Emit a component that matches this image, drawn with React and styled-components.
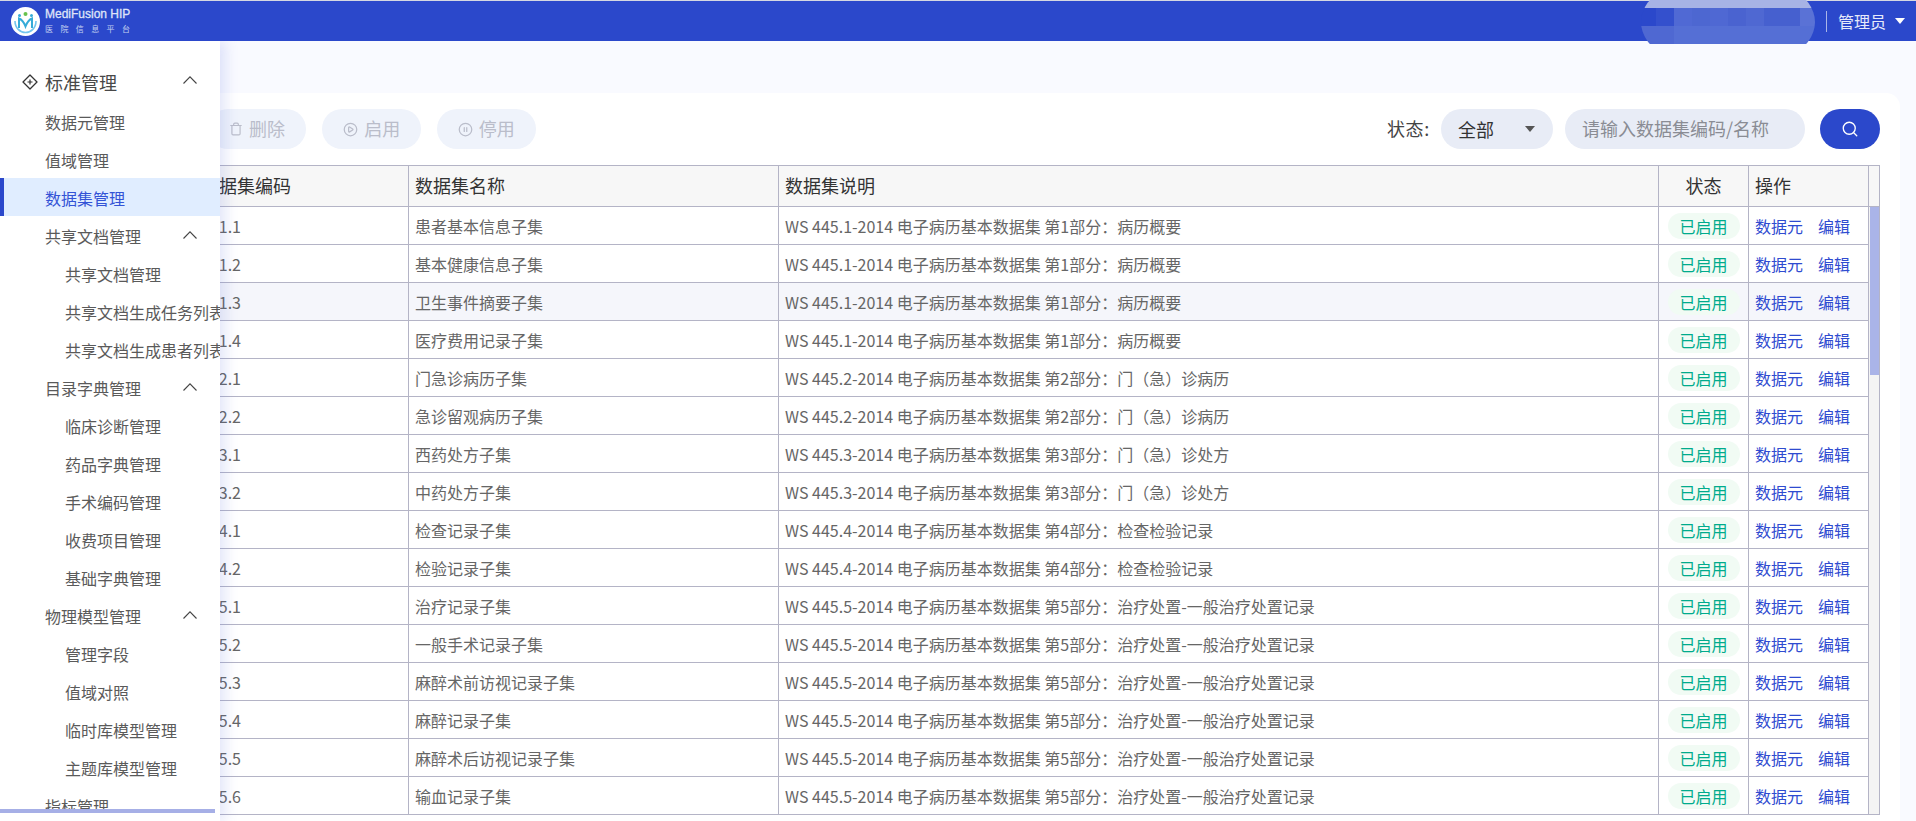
import styled, { createGlobalStyle } from 'styled-components'
import { Trash, CirclePlay, CirclePause, Search, Plus } from 'lucide-react'

const GlobalStyle = createGlobalStyle`
html, body {
    margin: 0;
    height: 821px;
    overflow: hidden;
    background: #f9faff;
    font-family: "Noto Sans CJK SC", "Liberation Sans", sans-serif;
}
* {
    box-sizing: border-box;
}
`

const Page = styled.div`
    position: relative;
    height: 821px;
    display: flex;
    flex-direction: column;
`

const TopBar = styled.header`
    position: relative;
    z-index: 3;
    height: 41px;
    flex: none;
    border-top: 1px solid #d5d8e2;
    background: #2b48cb;
    display: flex;
    align-items: center;
    justify-content: space-between;
    padding: 0 11px;
`

const Brand = styled.div`
    display: flex;
    align-items: center;
    gap: 5px;
`

const BrandText = styled.div`
    display: flex;
    flex-direction: column;
    color: #dfe4f8;
`

const BrandName = styled.span`
    font-family: "Liberation Sans", sans-serif;
    font-size: 12px;
    line-height: 15px;
    -webkit-text-stroke: 0.3px #dfe4f8;
`

const BrandSub = styled.span`
    font-size: 8px;
    line-height: 14px;
    letter-spacing: 7.4px;
    white-space: nowrap;
    opacity: 0.85;
`

const UserBox = styled.div`
    display: flex;
    align-items: center;
    color: #e6eafa;
    font-size: 16px;
`

const Divider = styled.span`
    width: 1px;
    height: 21px;
    background: #aab5e8;
    margin-right: 11px;
`

const Caret = styled.span`
    width: 0;
    height: 0;
    margin-left: 9px;
    border-left: 5px solid transparent;
    border-right: 5px solid transparent;
    border-top: 6px solid ${props => props.color || '#fff'};
`

const BlurPatch = styled.svg`
    position: absolute;
    z-index: 4;
    left: 1630px;
    top: 0;
`

const Main = styled.main`
    flex: 1;
    min-height: 0;
    padding: 52px 16px 0 73px;
`

const Card = styled.section`
    height: 100%;
    background: #fff;
    border-radius: 14px 14px 0 0;
    padding: 16px 20px 0;
`

const Toolbar = styled.div`
    display: flex;
    align-items: center;
    justify-content: space-between;
    height: 40px;
    margin-bottom: 16px;
`

const ActionGroup = styled.div`
    display: flex;
    gap: 16px;
`

const ActionButton = styled.button`
    width: 98.67px;
    height: 40px;
    border: 0;
    border-radius: 20px;
    background: #eff3fb;
    color: #babdca;
    font: inherit;
    font-size: 18px;
    display: flex;
    align-items: center;
    justify-content: center;
    gap: 6px;
    padding: 0 0 2px;
    svg {
        margin-top: 2px;
    }
`

const FilterGroup = styled.div`
    display: flex;
    align-items: center;
`

const FilterLabel = styled.span`
    font-size: 18px;
    color: #444;
    letter-spacing: 0.7px;
    margin-right: 11px;
    padding-bottom: 2px;
`

const SelectBox = styled.div`
    width: 112px;
    height: 40px;
    border-radius: 20px;
    background: #e8ecf6;
    color: #333;
    font-size: 18px;
    display: flex;
    align-items: center;
    justify-content: space-between;
    padding: 0 18px 0 17px;
    margin-right: 12px;
`

const SearchInput = styled.div`
    width: 240px;
    height: 40px;
    border-radius: 20px;
    background: #e8ecf6;
    color: #8a8c94;
    font-size: 18px;
    display: flex;
    align-items: center;
    padding: 0 0 2px 17px;
    margin-right: 15px;
`

const SearchButton = styled.button`
    width: 60px;
    height: 40px;
    border: 0;
    border-radius: 20px;
    background: #2b48cb;
    color: #fff;
    display: flex;
    align-items: center;
    justify-content: center;
    padding: 0;
`

const Table = styled.div`
    border: 1px solid #b4b4c6;
    width: 1787px;
    height: 650px;
`

const HeadRow = styled.div`
    display: grid;
    grid-template-columns: 101px 214px 370px 880px 90px 120px 10px;
    height: 41px;
    background: #f7f7f7;
    border-bottom: 1px solid #b4b4c6;
`

const BodyWrap = styled.div`
    display: flex;
`

const Rows = styled.div`
    flex: 1;
    min-width: 0;
`

const Row = styled.div`
    display: grid;
    grid-template-columns: 101px 214px 370px 880px 90px 120px;
    height: 38px;
    border-bottom: 1px solid #b4b4c6;
    background: ${props => (props.$hover ? '#f5f6fb' : '#fff')};
    &:last-child {
        height: 37px;
        border-bottom: 0;
    }
`

const HeadCell = styled.div`
    border-right: 1px solid #b4b4c6;
    padding: 0 6px 2px;
    font-size: 18px;
    color: #333;
    display: flex;
    align-items: center;
    justify-content: ${props => (props.$center ? 'center' : 'flex-start')};
    white-space: nowrap;
    overflow: hidden;
    &:last-child {
        border-right: 0;
    }
`

const Cell = styled.div`
    border-right: 1px solid #b4b4c6;
    padding: 0 6px;
    font-size: 16px;
    color: #666;
    display: flex;
    align-items: center;
    justify-content: ${props => (props.$center ? 'center' : 'flex-start')};
    white-space: nowrap;
    overflow: hidden;
`

const StatusPill = styled.span`
    width: 72px;
    height: 26px;
    border-radius: 13px;
    background: #f1fbf4;
    color: #00ab8c;
    font-size: 16px;
    line-height: 26px;
    text-align: center;
`

const LinkText = styled.a`
    color: #2f4bd0;
    font-size: 16px;
    margin-right: 15px;
`

const ScrollTrack = styled.div`
    width: 10px;
    flex: none;
    background: #f4f4f4;
    padding-left: 1px;
`

const ScrollThumb = styled.div`
    height: 168px;
    background: #aab4e8;
`

const Sidebar = styled.aside`
    position: absolute;
    z-index: 2;
    top: 41px;
    left: 0;
    bottom: 0;
    width: 220px;
    background: #fff;
    box-shadow: 6px 0 12px rgba(90, 105, 220, 0.16);
`

const NavScroll = styled.nav`
    height: 768px;
    overflow: hidden;
    padding-top: 18px;
`

const NavTitle = styled.div`
    height: 43px;
    display: flex;
    align-items: center;
    padding: 2px 23px 0 22px;
    font-size: 18px;
    color: #484848;
`

const NavIcon = styled.svg`
    margin-right: 7px;
    flex: none;
`

const NavRow = styled.div`
    height: 38px;
    display: flex;
    align-items: center;
    padding: 2px 23px 0 ${props => (props.$sub ? '65px' : '45px')};
    font-size: 16px;
    white-space: nowrap;
    color: ${props => (props.$active ? '#3353d6' : '#5a5a5a')};
    background: ${props => (props.$active ? '#e0edff' : 'transparent')};
    box-shadow: ${props => (props.$active ? 'inset 4px 0 0 #2b48cb' : 'none')};
`

const NavSpacer = styled.span`
    flex: 1;
`

const ChevronIcon = styled.svg`
    margin-top: -3px;
    flex: none;
`

const HScrollThumb = styled.div`
    width: 215px;
    height: 4px;
    background: #a6afe6;
`

const navItems = [
    { label: '数据元管理' },
    { label: '值域管理' },
    { label: '数据集管理', active: true },
    { label: '共享文档管理', group: true },
    { label: '共享文档管理', sub: true },
    { label: '共享文档生成任务列表', sub: true },
    { label: '共享文档生成患者列表', sub: true },
    { label: '目录字典管理', group: true },
    { label: '临床诊断管理', sub: true },
    { label: '药品字典管理', sub: true },
    { label: '手术编码管理', sub: true },
    { label: '收费项目管理', sub: true },
    { label: '基础字典管理', sub: true },
    { label: '物理模型管理', group: true },
    { label: '管理字段', sub: true },
    { label: '值域对照', sub: true },
    { label: '临时库模型管理', sub: true },
    { label: '主题库模型管理', sub: true },
    { label: '指标管理' },
]

const part1 = 'WS 445.1-2014 电子病历基本数据集 第1部分：病历概要'
const part2 = 'WS 445.2-2014 电子病历基本数据集 第2部分：门（急）诊病历'
const part3 = 'WS 445.3-2014 电子病历基本数据集 第3部分：门（急）诊处方'
const part4 = 'WS 445.4-2014 电子病历基本数据集 第4部分：检查检验记录'
const part5 = 'WS 445.5-2014 电子病历基本数据集 第5部分：治疗处置-一般治疗处置记录'

const rows = [
    ['001.1', '患者基本信息子集', part1],
    ['001.2', '基本健康信息子集', part1],
    ['001.3', '卫生事件摘要子集', part1],
    ['001.4', '医疗费用记录子集', part1],
    ['002.1', '门急诊病历子集', part2],
    ['002.2', '急诊留观病历子集', part2],
    ['003.1', '西药处方子集', part3],
    ['003.2', '中药处方子集', part3],
    ['004.1', '检查记录子集', part4],
    ['004.2', '检验记录子集', part4],
    ['005.1', '治疗记录子集', part5],
    ['005.2', '一般手术记录子集', part5],
    ['005.3', '麻醉术前访视记录子集', part5],
    ['005.4', '麻醉记录子集', part5],
    ['005.5', '麻醉术后访视记录子集', part5],
    ['005.6', '输血记录子集', part5],
]

const blurTop = [
    [26, '#3450cd'], [44, '#5069d4'], [62, '#4d67d1'], [80, '#4f68d3'],
    [98, '#4a63d0'], [116, '#4f68d2'], [134, '#4660cf'], [152, '#4660cf'], [170, '#5a72d6'],
]

const Logo = () => (
    <svg width="29" height="29" viewBox="0 0 29 29">
        <circle cx="14.5" cy="14.5" r="14.5" fill="#fff" />
        <path d="M4 14c0 7 5 11.500 10.500 11.500S25 21 25 14" fill="none" stroke="#74c5ee" strokeWidth="1.600" />
        <path d="M8 21V11.500c3 1 5 4 6.500 8 1.500-4 3.500-7 6.500-8V21" fill="none" stroke="#36abd8" strokeWidth="2" />
        <circle cx="8.500" cy="8.500" r="1.500" fill="#36abd8" />
        <circle cx="20.500" cy="8.500" r="1.500" fill="#36abd8" />
        <circle cx="14.500" cy="7" r="2" fill="#68c24c" />
    </svg>
)

const Chevron = () => (
    <ChevronIcon width="14" height="8" viewBox="0 0 14 8">
        <path d="M0.500 7.500L7 0.800L13.500 7.500" fill="none" stroke="#444" strokeWidth="1.100" />
    </ChevronIcon>
)

const App = () => {
    return (
        <Page>
            <GlobalStyle />
            <TopBar>
                <Brand>
                    <Logo />
                    <BrandText>
                        <BrandName>MediFusion HIP</BrandName>
                        <BrandSub>医院信息平台</BrandSub>
                    </BrandText>
                </Brand>
                <UserBox>
                    <Divider />
                    管理员
                    <Caret />
                </UserBox>
            </TopBar>
            <BlurPatch width="200" height="44" viewBox="0 0 200 44">
                <clipPath id="blur-shape">
                    <ellipse cx="98" cy="22" rx="87" ry="50" />
                </clipPath>
                <g clipPath="url(#blur-shape)">
                    <rect x="0" y="0" width="200" height="8" fill="#a7b3e5" />
                    <rect x="0" y="8" width="200" height="18" fill="#2b48cb" />
                    {blurTop.map(([x, fill]) => (
                        <rect key={x} x={x} y="8" width="18" height="18" fill={fill} />
                    ))}
                    <rect x="0" y="26" width="44" height="18" fill="#4f68d2" />
                    <rect x="44" y="26" width="156" height="18" fill="#556fd5" />
                </g>
            </BlurPatch>
            <Main>
                <Card>
                    <Toolbar>
                        <ActionGroup>
                            <ActionButton><Plus size={14} />新增</ActionButton>
                            <ActionButton><Trash size={14} />删除</ActionButton>
                            <ActionButton><CirclePlay size={15} />启用</ActionButton>
                            <ActionButton><CirclePause size={15} />停用</ActionButton>
                        </ActionGroup>
                        <FilterGroup>
                            <FilterLabel>状态:</FilterLabel>
                            <SelectBox>
                                全部
                                <Caret color="#555" />
                            </SelectBox>
                            <SearchInput>请输入数据集编码/名称</SearchInput>
                            <SearchButton><Search size={18} strokeWidth={1.800} /></SearchButton>
                        </FilterGroup>
                    </Toolbar>
                    <Table>
                        <HeadRow>
                            <HeadCell />
                            <HeadCell>数据集编码</HeadCell>
                            <HeadCell>数据集名称</HeadCell>
                            <HeadCell>数据集说明</HeadCell>
                            <HeadCell $center>状态</HeadCell>
                            <HeadCell>操作</HeadCell>
                            <HeadCell />
                        </HeadRow>
                        <BodyWrap>
                            <Rows>
                                {rows.map(([code, name, desc], index) => (
                                    <Row key={code} $hover={index === 2}>
                                        <Cell />
                                        <Cell>{code}</Cell>
                                        <Cell>{name}</Cell>
                                        <Cell>{desc}</Cell>
                                        <Cell $center><StatusPill>已启用</StatusPill></Cell>
                                        <Cell>
                                            <LinkText>数据元</LinkText>
                                            <LinkText>编辑</LinkText>
                                        </Cell>
                                    </Row>
                                ))}
                            </Rows>
                            <ScrollTrack>
                                <ScrollThumb />
                            </ScrollTrack>
                        </BodyWrap>
                    </Table>
                </Card>
            </Main>
            <Sidebar>
                <NavScroll>
                    <NavTitle>
                        <NavIcon width="16" height="16" viewBox="0 0 16 16">
                            <path d="M8 1L15 8L8 15L1 8Z" fill="none" stroke="#333" strokeWidth="1.300" strokeLinejoin="round" />
                            <path d="M8 5.500V10.500M5.500 8H10.500" stroke="#333" strokeWidth="1.200" />
                        </NavIcon>
                        标准管理
                        <NavSpacer />
                        <Chevron />
                    </NavTitle>
                    {navItems.map((item, index) => (
                        <NavRow key={index} $sub={item.sub} $active={item.active}>
                            {item.label}
                            {item.group && <NavSpacer />}
                            {item.group && <Chevron />}
                        </NavRow>
                    ))}
                </NavScroll>
                <HScrollThumb />
            </Sidebar>
        </Page>
    )
}

export default App
